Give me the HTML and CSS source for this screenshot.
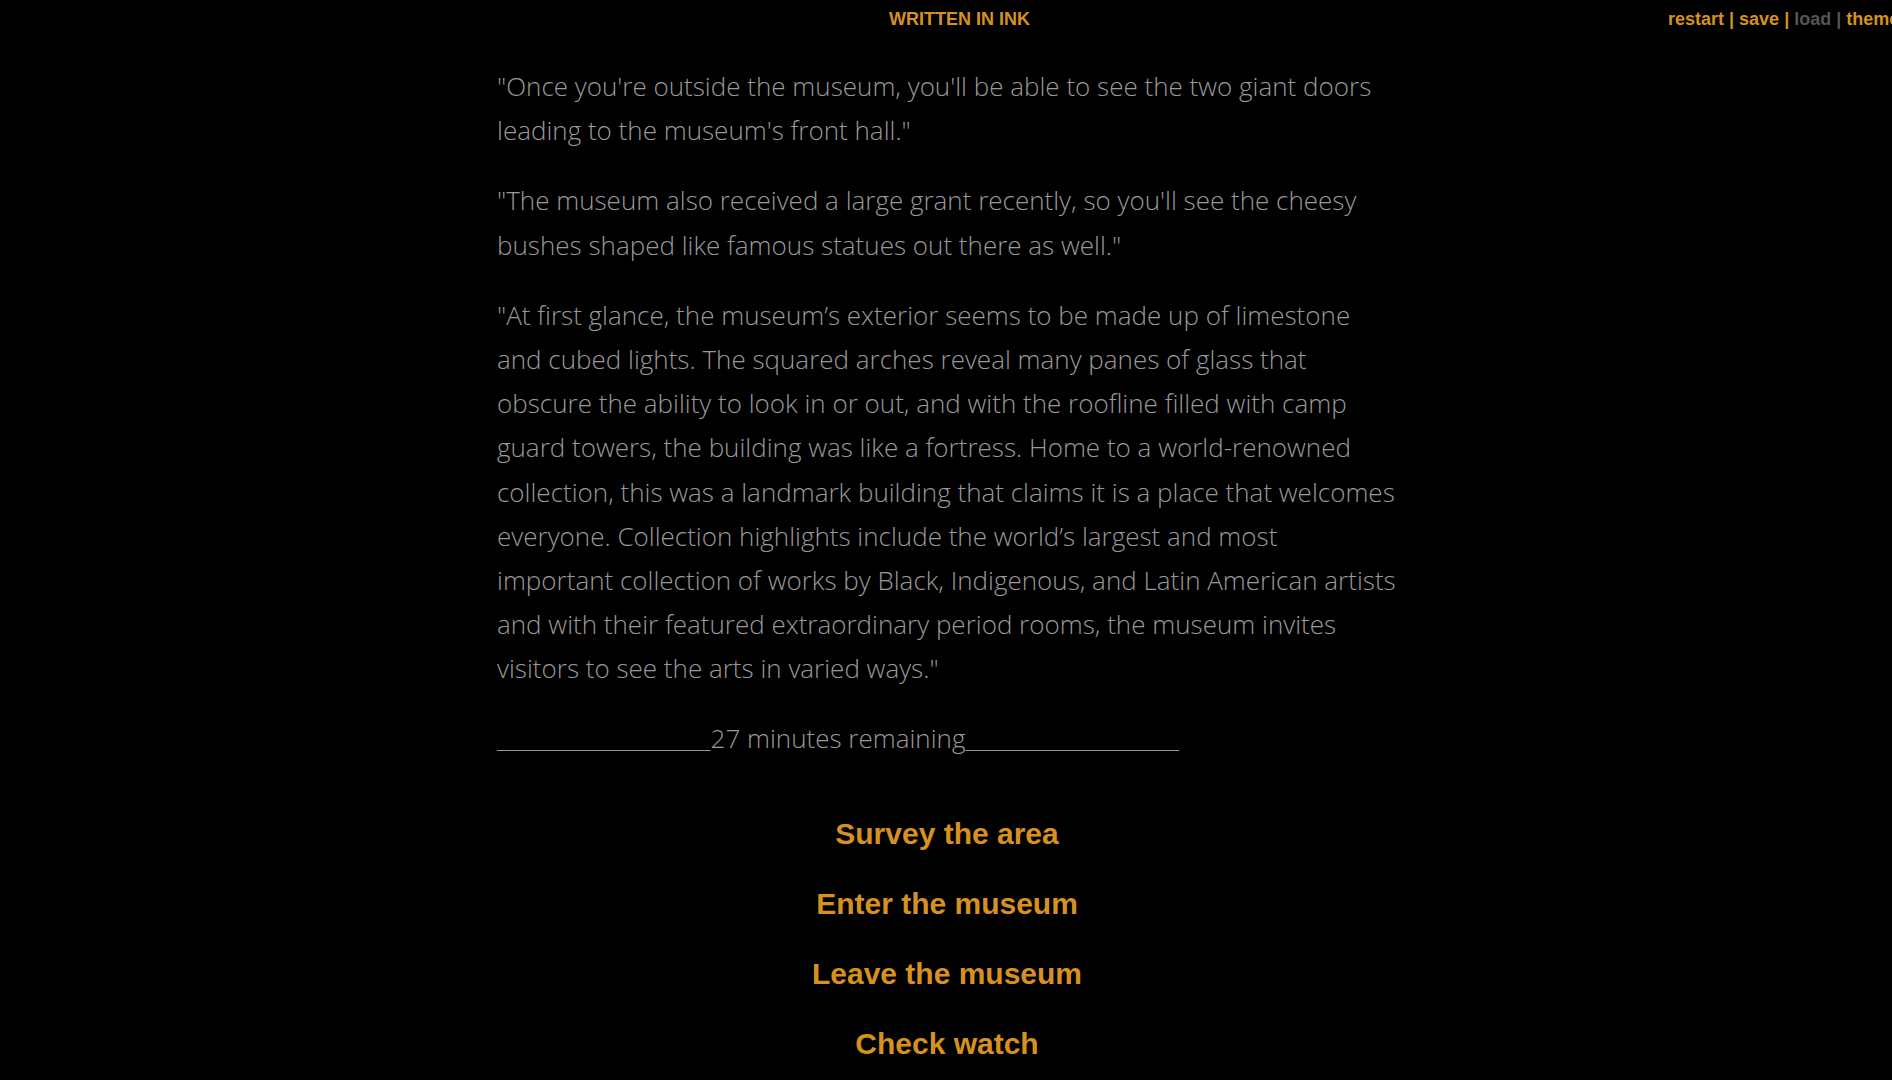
FILE: index.html
```html
<!DOCTYPE html>
<html lang="en">
<head>
<meta charset="utf-8">
<title>Written in Ink</title>
<link rel="stylesheet" href="styles.css">
</head>
<body>
<header class="topbar">
  <h1 class="title">WRITTEN IN INK</h1>
  <nav class="controls"><span class="on">restart</span> | <span class="on">save</span> | <span class="off">load |</span> <span class="on">theme</span></nav>
</header>
<main class="story">
  <p>"Once you're outside the museum, you'll be able to see the two giant doors leading to the museum's front hall."</p>
  <p>"The museum also received a large grant recently, so you'll see the cheesy bushes shaped like famous statues out there as well."</p>
  <p>"At first glance, the museum’s exterior seems to be made up of limestone and cubed lights. The squared arches reveal many panes of glass that obscure the ability to look in or out, and with the roofline filled with camp guard towers, the building was like a fortress. Home to a world-renowned collection, this was a landmark building that claims it is a place that welcomes everyone. Collection highlights include the world’s largest and most important collection of works by Black, Indigenous, and Latin American artists and with their featured extraordinary period rooms, the museum invites visitors to see the arts in varied ways."</p>
  <p class="timer">____________________27 minutes remaining____________________</p>
  <div class="choices">
    <a class="choice">Survey the area</a>
    <a class="choice">Enter the museum</a>
    <a class="choice">Leave the museum</a>
    <a class="choice">Check watch</a>
  </div>
</main>
</body>
</html>
```
FILE: styles.css
```css
html, body {
  margin: 0;
  padding: 0;
  background: #000;
}
body {
  overflow: hidden;
  height: 1080px;
}
.topbar {
  display: flex;
  align-items: baseline;
  white-space: nowrap;
  padding-top: 8px;
  height: 23px;
  font-family: "Liberation Sans", Arial, sans-serif;
  font-weight: bold;
  font-size: 18px;
  line-height: 22px;
  color: #d6911e;
}
.title {
  margin: 0 0 0 889px;
  font-size: 18px;
  font-weight: bold;
  flex-shrink: 0;
}
.controls {
  margin-left: 638px;
  flex-shrink: 0;
}
.controls .off {
  color: #555;
}
.story {
  max-width: 900px;
  margin: 0 auto;
  padding: 33px 0 0 2px;
  font-family: "Open Sans", sans-serif;
  font-weight: 300;
  font-size: 26px;
  line-height: 1.7;
  color: #999;
}
.story p {
  margin: 0 0 26px;
}
.choices {
  display: flex;
  flex-direction: column;
  align-items: center;
  gap: 34px;
  padding-top: 29px;
}
.choice {
  font-family: "Liberation Sans", Arial, sans-serif;
  font-weight: bold;
  font-size: 30px;
  line-height: 36px;
  color: #d6911e;
  cursor: pointer;
}
```
